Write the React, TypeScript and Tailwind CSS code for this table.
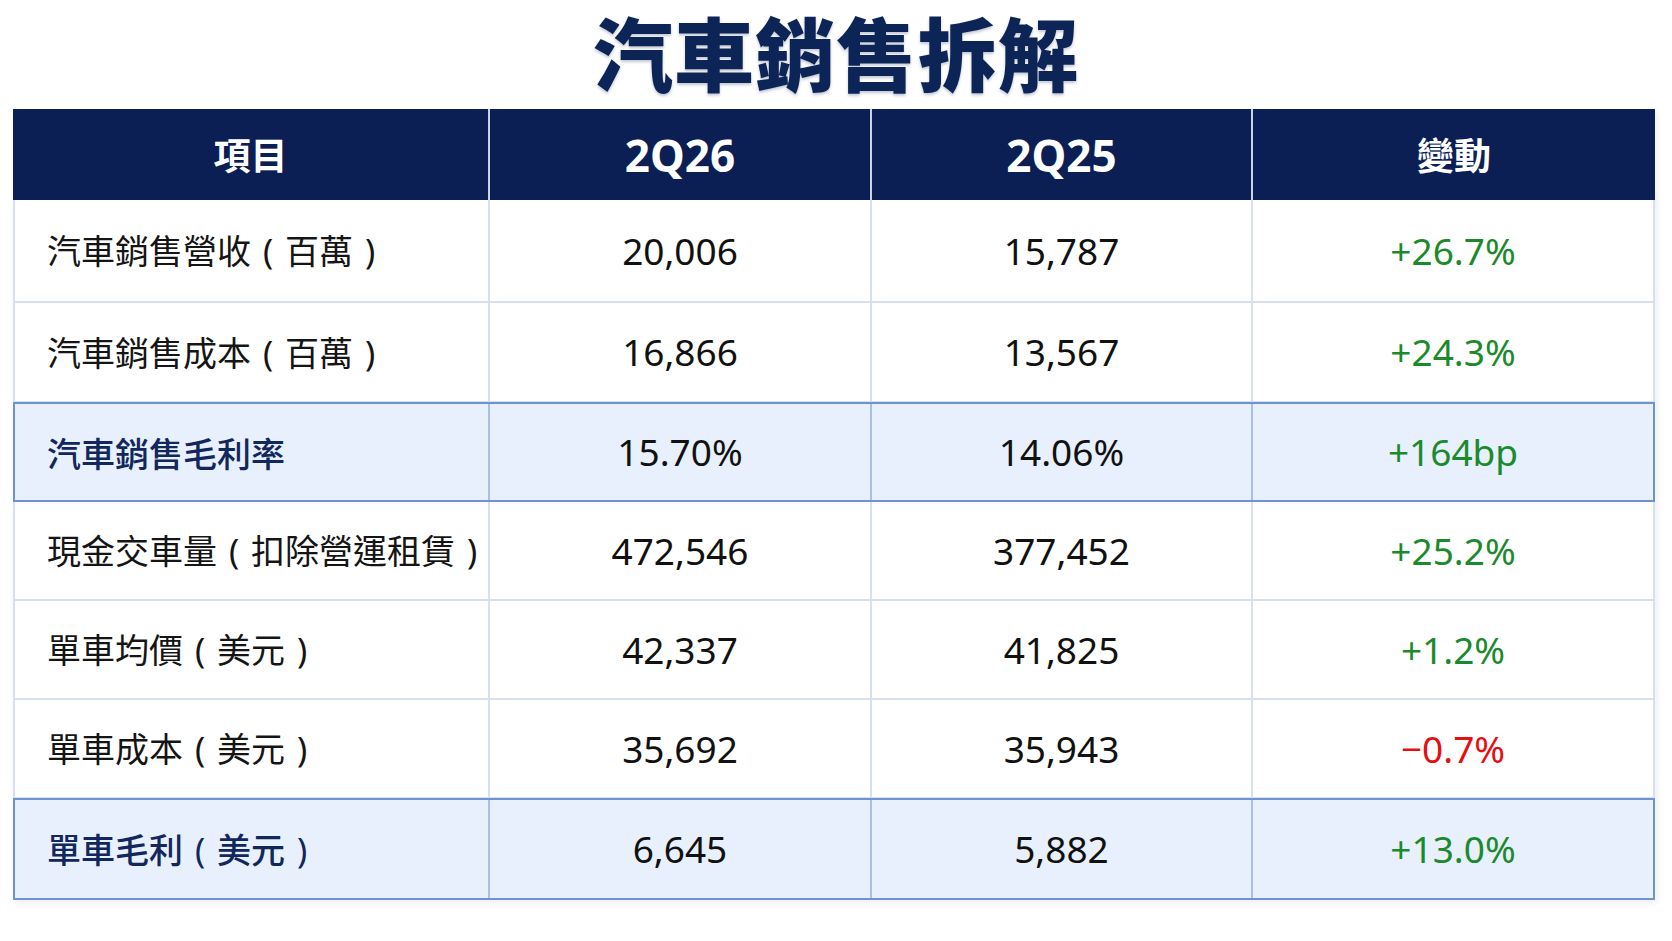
import React from "react";

type Row = {
  label: string;
  a: string;
  b: string;
  change: string;
  tone: "up" | "down";
  highlight?: boolean;
  h: string;
};

const rows: Row[] = [
  { label: "汽車銷售營收（百萬）", a: "20,006", b: "15,787", change: "+26.7%", tone: "up", h: "h-[103px]" },
  { label: "汽車銷售成本（百萬）", a: "16,866", b: "13,567", change: "+24.3%", tone: "up", h: "h-[100px]" },
  { label: "汽車銷售毛利率", a: "15.70%", b: "14.06%", change: "+164bp", tone: "up", highlight: true, h: "h-[100px]" },
  { label: "現金交車量（扣除營運租賃）", a: "472,546", b: "377,452", change: "+25.2%", tone: "up", h: "h-[99px]" },
  { label: "單車均價（美元）", a: "42,337", b: "41,825", change: "+1.2%", tone: "up", h: "h-[99px]" },
  { label: "單車成本（美元）", a: "35,692", b: "35,943", change: "−0.7%", tone: "down", h: "h-[99px]" },
  { label: "單車毛利（美元）", a: "6,645", b: "5,882", change: "+13.0%", tone: "up", highlight: true, h: "h-[102px]" },
];

const cjk = "font-['Noto_Sans_CJK_TC','Noto_Sans',sans-serif]";
const latin = "font-['Noto_Sans','Noto_Sans_CJK_TC',sans-serif]";

// parens sit centred in a full-width slot, like the slide
const Label = ({ text }: { text: string }) => (
  <span className="whitespace-nowrap">
    {text.split(/([（）])/).map((part, i) =>
      part === "（" || part === "）" ? (
        <span key={i} className={`inline-block w-[1em] text-center ${latin} font-normal`}>
          {part === "（" ? "(" : ")"}
        </span>
      ) : (
        <span key={i}>{part}</span>
      )
    )}
  </span>
);

const App = () => {
  return (
    <div className="w-[1672px] h-[941px] bg-white overflow-hidden">
      <div className="h-[109px] flex items-center justify-center pb-[10px]">
        <h1
          className={`${cjk} text-[80px] leading-[1.15] font-black text-[#0d2457] tracking-[1px] [text-shadow:0_2px_3px_rgba(10,30,80,0.25)]`}
        >
          汽車銷售拆解
        </h1>
      </div>

      <div className="ml-[13px] w-[1642px] shadow-[2px_3px_6px_rgba(20,40,90,0.08)]">
        <div className="flex h-[91px] bg-[#0b1f55] text-white">
          <div className={`w-[477px] flex items-center justify-center border-r-2 border-[#c9d3e6] ${cjk} text-[37px] font-bold`}>
            項目
          </div>
          <div className={`w-[382px] flex items-center justify-center border-r-2 border-[#c9d3e6] ${latin} text-[44px] font-bold`}>
            2Q26
          </div>
          <div className={`w-[381px] flex items-center justify-center border-r-2 border-[#c9d3e6] ${latin} text-[44px] font-bold`}>
            2Q25
          </div>
          <div className={`flex-1 flex items-center justify-center ${cjk} text-[37px] font-bold`}>
            變動
          </div>
        </div>

        {rows.map((r) => {
          const line = r.highlight ? "border-[#a9bfe4]" : "border-[#d8dfee]";
          return (
            <div
              key={r.label}
              className={`flex ${r.h} ${
                r.highlight
                  ? "relative z-10 -mt-px border-2 border-[#6f93cf] bg-[#e7f0fc]"
                  : "border-x-2 border-b-2 border-[#d8dfee] bg-white"
              }`}
            >
              <div
                className={`w-[475px] flex items-center pl-[32px] border-r-2 ${line} ${cjk} text-[34px] ${
                  r.highlight ? "text-[#12275c] font-medium" : "text-[#151515]"
                }`}
              >
                <Label text={r.label} />
              </div>
              <div className={`w-[382px] flex items-center justify-center border-r-2 ${line} ${latin} text-[37px] text-[#111]`}>
                {r.a}
              </div>
              <div className={`w-[381px] flex items-center justify-center border-r-2 ${line} ${latin} text-[37px] text-[#111]`}>
                {r.b}
              </div>
              <div
                className={`flex-1 flex items-center justify-center ${latin} text-[37px] ${
                  r.tone === "up" ? "text-[#1b8a2c]" : "text-[#e50f10]"
                }`}
              >
                {r.change}
              </div>
            </div>
          );
        })}
      </div>
    </div>
  );
};

export default App;
